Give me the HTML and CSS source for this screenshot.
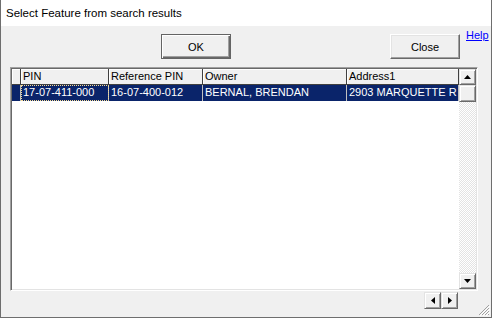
FILE: index.html
```html
<!DOCTYPE html>
<html lang="en">
<head>
    <meta charset="UTF-8">
    <title>Select Feature from search results</title>
    <link rel="stylesheet" href="styles.css">
</head>
<body>
    <div class="window">
        <div class="titlebar">Select Feature from search results</div>

        <div class="client">
            <div class="actions">
                <button class="btn btn-default">OK</button>
                <button class="btn btn-close">Close</button>
                <a class="help" href="#">Help</a>
            </div>

            <div class="grid">
                <div class="table">
                    <div class="row head">
                        <div class="cell ind"></div>
                        <div class="cell c-pin">PIN</div>
                        <div class="cell c-ref">Reference PIN</div>
                        <div class="cell c-owner">Owner</div>
                        <div class="cell c-addr">Address1</div>
                    </div>
                    <div class="row data selected">
                        <div class="cell ind"></div>
                        <div class="cell c-pin focus">17-07-411-000</div>
                        <div class="cell c-ref">16-07-400-012</div>
                        <div class="cell c-owner">BERNAL, BRENDAN</div>
                        <div class="cell c-addr">2903 MARQUETTE R</div>
                    </div>
                </div>
                <div class="vscroll">
                    <div class="sbtn">
                        <svg width="7" height="4" viewBox="0 0 7 4"><polygon points="3.5,0 7,4 0,4" fill="#000"/></svg>
                    </div>
                    <div class="sbtn thumb"></div>
                    <div class="track"></div>
                    <div class="sbtn">
                        <svg width="7" height="4" viewBox="0 0 7 4"><polygon points="0,0 7,0 3.5,4" fill="#000"/></svg>
                    </div>
                </div>
            </div>

            <div class="hscroll">
                <div class="sbtn">
                    <svg width="4" height="7" viewBox="0 0 4 7"><polygon points="4,0 4,7 0,3.5" fill="#000"/></svg>
                </div>
                <div class="sbtn">
                    <svg width="4" height="7" viewBox="0 0 4 7"><polygon points="0,0 4,3.5 0,7" fill="#000"/></svg>
                </div>
            </div>

            <!-- size grip -->
            <svg class="grip" width="12" height="12" viewBox="0 0 12 12">
                <path d="M11 1 L1 11 M11 4 L4 11 M11 7 L7 11 M11 10 L10 11" stroke="#a0a0a0" stroke-width="1"/>
                <path d="M12 2 L2 12 M12 5 L5 12 M12 8 L8 12" stroke="#fff" stroke-width="1"/>
            </svg>
        </div>
    </div>
</body>
</html>
```

FILE: styles.css
```css
body {
    margin: 0;
    width: 492px;
    height: 318px;
    overflow: hidden;
    background: #f0f0f0;
    font-family: 'Liberation Sans', Arial, sans-serif;
}

.window {
    box-sizing: border-box;
    width: 492px;
    height: 318px;
    display: flex;
    flex-direction: column;
    border-left: 1px solid #6e6e6e;
    border-right: 1px solid #6e6e6e;
    border-bottom: 1px solid #6e6e6e;
}

.titlebar {
    height: 26px;
    background: #fff;
    color: #000;
    font-size: 11.5px;
    line-height: 27px;
    padding-left: 5px;
    flex-shrink: 0;
}

.client {
    flex: 1;
    position: relative;
    background: #f0f0f0;
}

/* buttons row */
.actions {
    display: flex;
    align-items: flex-start;
    padding: 8px 0 0 160px;
}

.btn {
    box-sizing: border-box;
    width: 70px;
    height: 25px;
    padding: 0;
    margin: 0;
    background: #f0f0f0;
    font-family: 'Liberation Sans', Arial, sans-serif;
    font-size: 11px;
    color: #000;
    border: 1px solid;
    border-color: #fff #696969 #696969 #fff;
    box-shadow: inset -1px -1px #a0a0a0, inset 1px 1px #e3e3e3;
}

.btn-default {
    border-color: #646464;
    box-shadow: inset 1px 1px #fff, inset -1px -1px #696969, inset -2px -2px #a0a0a0;
}

.btn-close {
    margin-left: 159px;
}

.help {
    margin: -5px 0 0 6px;
    font-size: 11px;
    color: #0000ff;
    text-decoration: underline;
}

/* grid */
.grid {
    box-sizing: border-box;
    display: flex;
    width: 468px;
    height: 224px;
    margin: 8px 0 0 9px;
    border: 1px solid;
    border-color: #a0a0a0 #fff #fff #a0a0a0;
    box-shadow: inset 1px 1px #696969, inset -1px -1px #e3e3e3;
    padding: 1px;
    background: #fff;
}

.table {
    flex: 1;
    overflow: hidden;
    font-size: 11px;
}

.row {
    display: flex;
    height: 16px;
    white-space: nowrap;
}

.cell {
    box-sizing: border-box;
    height: 16px;
    line-height: 15px;
    padding-left: 2px;
    overflow: hidden;
    flex-shrink: 0;
}

.ind { width: 9px; }
.c-pin { width: 88px; }
.c-ref { width: 94px; }
.c-owner { width: 144px; }
.c-addr { width: 112px; }

.head .cell {
    background: #f0f0f0;
    color: #000;
    border-right: 1px solid #404040;
    border-bottom: 1px solid #404040;
    box-shadow: inset 1px 1px #fff;
}

.data .cell {
    border-right: 1px solid #c0c0c0;
}

.selected .cell {
    background: #0a246a;
    color: #fff;
}

.focus {
    outline: 1px dotted #f5db95;
    outline-offset: -1px;
}

/* scrollbars */
.vscroll {
    width: 17px;
    display: flex;
    flex-direction: column;
}

.sbtn {
    box-sizing: border-box;
    width: 17px;
    height: 16px;
    display: flex;
    align-items: center;
    justify-content: center;
    background: #f0f0f0;
    border: 1px solid;
    border-color: #e3e3e3 #696969 #696969 #e3e3e3;
    box-shadow: inset 1px 1px #fff, inset -1px -1px #a0a0a0;
    flex-shrink: 0;
}

.thumb {
    height: 17px;
}

.track {
    flex: 1;
    background: repeating-conic-gradient(#fff 0 25%, #e3e3e3 0 50%) 0 0 / 2px 2px;
}

.hscroll {
    display: flex;
    padding: 1px 0 0 423px;
}

.hscroll .sbtn {
    height: 17px;
}

.grip {
    position: absolute;
    right: 1px;
    bottom: 1px;
}
```
